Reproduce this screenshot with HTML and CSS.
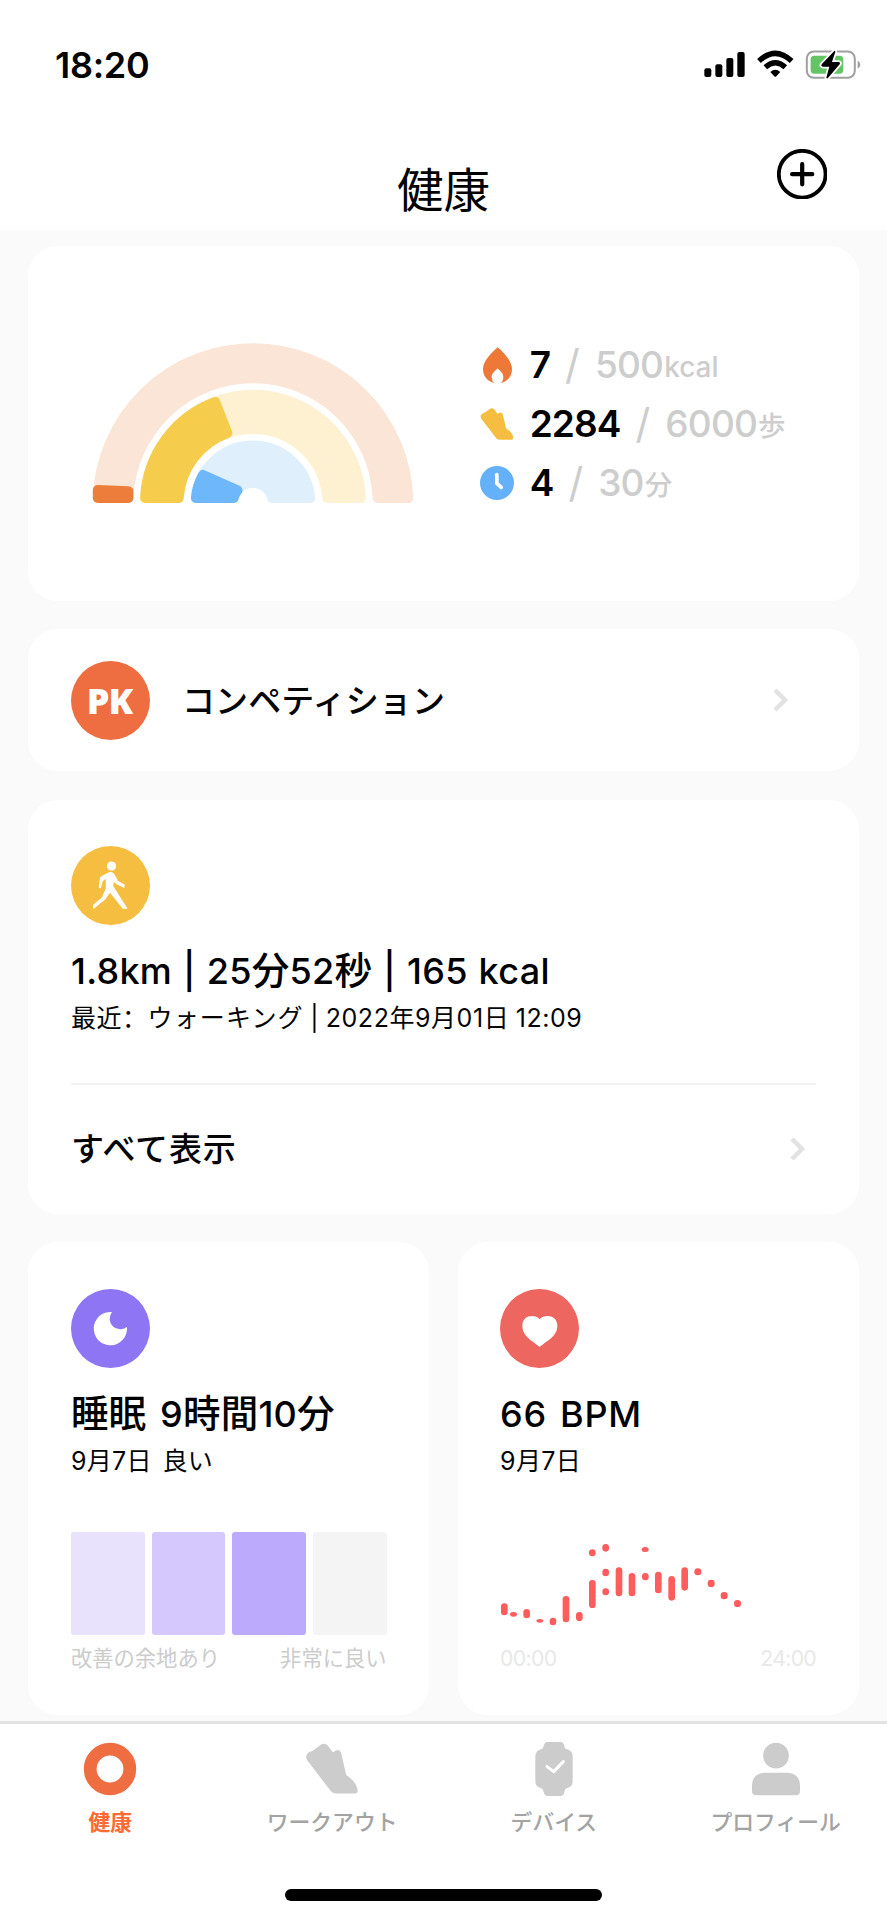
FILE: index.html
```html
<!DOCTYPE html>
<html lang="ja">
<head>
<meta charset="utf-8">
<title>健康</title>
<link rel="stylesheet" href="styles.css">
</head>
<body>
<svg class="defs" width="0" height="0">
  <symbol id="shoe" viewBox="53 57 155 151"><path d="M57 88Q62 82 72 80L98 61Q108 55 117 63L133 84L142 79Q154 74 158 88L173 152Q207 175 207 200Q206 207 199 207H142Q134 207 128 201L57 109Q50 98 57 88Z"/></symbol>
</svg>
<div class="screen">
  <header class="header">
    <div class="status">
      <span class="time">18:20</span>
      <svg class="status-icons" viewBox="50 30 472 90">
        <rect x="51" y="85" width="21" height="26" rx="6"/><rect x="84" y="73" width="21" height="38" rx="6"/><rect x="117" y="54" width="21" height="57" rx="6"/><rect x="150" y="36" width="22" height="75" rx="6"/>
        <g fill="none" stroke="#000" stroke-width="16"><path d="M215 63Q264 17 313 63"/><path d="M234 82Q264 55 294 82"/></g>
        <path d="M249 96Q264 83 279 96L267 109Q264 112 261 109Z"/>
        <rect x="358.500" y="34.500" width="144" height="79" rx="21" fill="none" stroke="#a0a0a0" stroke-width="6"/>
        <path d="M511 62Q519 65 519 74T511 86Z" fill="#a0a0a0"/>
        <rect x="370" y="47" width="98" height="54" rx="11" fill="#65c466"/>
        <path d="M441 33L403 73Q400 79 407 80H426L417 113Q418 117 422 114L457 73Q460 67 454 66H434L444 36Q444 31 441 33Z" stroke="#fff" stroke-width="11" paint-order="stroke"/>
      </svg>
    </div>
    <div class="titlebar">
      <h1>健康</h1>
      <svg class="add" viewBox="0 0 50 50" fill="none" stroke="#000"><circle cx="25" cy="25" r="23.200" stroke-width="3.800"/><path d="M25 15V35M15 25H35" stroke-width="4.200" stroke-linecap="round"/></svg>
    </div>
  </header>

  <main class="content">
    <section class="card rings">
      <svg class="arcs" viewBox="-161 -161 322 161" stroke-width="10" stroke-linejoin="round">
        <path class="t1" d="M-155.200-5A155.300 155.300 0 0 1 155.200-5H124.600A124.700 124.700 0 0 0-124.600-5Z"/>
        <path class="t2" d="M-107.900-5A108 108 0 0 1 107.900-5H74.300A74.500 74.500 0 0 0-74.300-5Z"/>
        <path class="t3" d="M-57.100-5A57.300 57.300 0 0 1 57.100-5H19.400A20 20 0 0 0-19.400-5Z"/>
        <path class="p1" d="M-155.200-5L-155.200-13L-124.600-11.700V-5Z"/>
        <path class="p2" d="M-107.900-5A108 108 0 0 1-37.900-101.100L-25.600-70A74.500 74.500 0 0 0-74.300-5Z"/>
        <path class="p3" d="M-57.100-5A57.300 57.300 0 0 1-50-28L-15.500-12.700A20 20 0 0 0-19.400-5Z"/>
      </svg>
      <ul class="goals">
        <li><svg class="gi" viewBox="60 79 102 108"><path fill="#ed7837" d="M113 80C99 92 69 120 69 145C69 169 84 182 103 187Q95 181 95 169C95 157 107 150 113 143C119 150 130 157 130 169Q130 181 122 187C142 182 156 168 156 145C156 120 127 92 113 80Z"/></svg><b>7</b><i>/</i><span class="goal">500</span><small class="kcal">kcal</small></li>
        <li><svg class="gi shoe"><use href="#shoe"/></svg><b>2284</b><i>/</i><span class="goal">6000</span><small>歩</small></li>
        <li><svg class="gi" viewBox="60 438 101 102"><circle cx="110.500" cy="489" r="50.500" fill="#64b0f9"/><path d="M110 464V490L123 502" fill="none" stroke="#fff" stroke-width="11" stroke-linecap="round" stroke-linejoin="round"/></svg><b>4</b><i>/</i><span class="goal">30</span><small>分</small></li>
      </ul>
    </section>

    <section class="card compete">
      <div class="badge pk">PK</div>
      <span class="row-label">コンペティション</span>
      <svg class="chev" viewBox="0 0 16 24"><path d="M3 2L13 12L3 22"/></svg>
    </section>

    <section class="card workout">
      <svg class="badge" viewBox="0 0 79 79"><circle cx="39.500" cy="39.500" r="39.500" fill="#f5be41"/><g fill="#fff"><circle cx="40.600" cy="20" r="4.600"/><path d="M37.900 26.300L30 30.400Q29.100 31 29 32L27.700 41.300L29.800 42.500L31.800 35L34.800 33V42.300L31 51.300L22.200 58.700V63.200L34.400 53.300L39 46.700L51.700 62.700H56.600L42.300 40L42.900 35.700L45.500 38.300L53.200 41.900L53.800 38.700L47.100 35L43.300 28Q41 25 37.900 26.300Z"/></g></svg>
      <h2 class="w-title">1.8km | 25<span class="kanji">分</span>52<span class="kanji">秒</span> | 165 kcal</h2>
      <p class="sub w-sub">最近<span class="colon" lang="zh-CN">：</span><span class="kind">ウォーキング</span> | 2022年9月01日 12:09</p>
      <div class="all"><span class="row-label">すべて表示</span><svg class="chev" viewBox="0 0 16 24"><path d="M3 2L13 12L3 22"/></svg></div>
    </section>

    <div class="pair">
      <section class="card metric">
        <svg class="badge" viewBox="153 148 237 237"><circle cx="271.500" cy="266.500" r="118.500" fill="#8e75f3"/><path fill="#fff" d="M276 217A32 32 0 0 0 321 262A50 50 0 1 1 276 217Z"/></svg>
        <h2 class="s-title"><span class="kanji">睡眠</span> 9<span class="kanji">時間</span>10<span class="kanji">分</span></h2>
        <p class="sub">9月7日 良い</p>
        <div class="bars"><span></span><span></span><span></span><span></span></div>
        <div class="scale"><span>改善の余地あり</span><span>非常に良い</span></div>
      </section>
      <section class="card metric">
        <svg class="badge" viewBox="150 87 237 237"><circle cx="268.500" cy="205.500" r="118.500" fill="#ee6660"/><path fill="#fff" d="M269 178C255 162 217 164 217 198C217 231 251 244 269 261C287 244 322 231 322 198C322 164 283 162 269 178Z"/></svg>
        <h2 class="b-title">66 BPM</h2>
        <p class="sub">9月7日</p>
        <svg class="pulse" viewBox="150 96 948 309" fill="#ff5c5e">
          <rect x="153" y="310" width="20" height="36" rx="10"/><rect x="180" y="336" width="21" height="14" rx="10"/><rect x="220" y="327" width="20" height="28" rx="10"/><rect x="259" y="357" width="21" height="11" rx="10"/><rect x="299" y="353" width="20" height="23" rx="10"/><rect x="338" y="288" width="20" height="79" rx="10"/><rect x="378" y="336" width="20" height="27" rx="10"/><rect x="417" y="240" width="20" height="84" rx="10"/><rect x="417" y="148" width="20" height="21" rx="10"/><rect x="457" y="132" width="20" height="23" rx="10"/><rect x="457" y="206" width="20" height="23" rx="10"/><rect x="457" y="265" width="20" height="21" rx="10"/><rect x="497" y="202" width="20" height="87" rx="10"/><rect x="536" y="219" width="20" height="70" rx="10"/><rect x="575" y="141" width="21" height="15" rx="10"/><rect x="576" y="219" width="20" height="22" rx="10"/><rect x="615" y="215" width="20" height="65" rx="10"/><rect x="655" y="228" width="20" height="74" rx="10"/><rect x="694" y="202" width="20" height="70" rx="10"/><rect x="733" y="205" width="21" height="21" rx="10"/><rect x="773" y="239" width="21" height="22" rx="10"/><rect x="812" y="276" width="21" height="22" rx="10"/><rect x="852" y="300" width="21" height="21" rx="10"/>
        </svg>
        <div class="scale hours"><span>00:00</span><span>24:00</span></div>
      </section>
    </div>
  </main>

  <nav class="tabs">
    <a class="tab active"><svg class="ti" viewBox="0 0 54 54"><circle cx="27" cy="27" r="19.800" fill="none" stroke="#ee6d41" stroke-width="12.800"/></svg>健康</a>
    <a class="tab"><svg class="ti ti-shoe"><use href="#shoe"/></svg>ワークアウト</a>
    <a class="tab"><svg class="ti" viewBox="713 50 162 162"><path d="M774 50H814Q820 50 823 56L827 68Q828 71 833 72Q850 76 850 94V168Q850 184 833 189Q828 190 827 194L823 206Q820 212 814 212H774Q768 212 765 206L761 194Q760 190 755 189Q738 184 738 168V94Q738 76 755 72Q760 71 761 68L765 56Q768 50 774 50Z"/><path d="M773 124L793 139L822 109" fill="none" stroke="#fff" stroke-width="9" stroke-linecap="round" stroke-linejoin="round"/></svg>デバイス</a>
    <a class="tab"><svg class="ti" viewBox="1374 50 162 162"><circle cx="1455" cy="91" r="38.500"/><path d="M1420 142H1490Q1527 146 1527 180V197Q1527 210 1514 210H1396Q1383 210 1383 197V180Q1383 146 1420 142Z"/></svg>プロフィール</a>
  </nav>
  <div class="home"></div>
</div>
</body>
</html>
```

FILE: styles.css
```css
* { box-sizing: border-box; margin: 0; padding: 0; }
body { background: #fff; color: #050505; font-family: Inter, "Noto Sans CJK JP", sans-serif; }
svg { display: block; flex: none; }
.defs { position: absolute; }
.screen { width: 887px; height: 1920px; display: flex; flex-direction: column; overflow: hidden; }

.header { height: 230px; flex: none; }
.status { height: 130px; padding: 43px 26px 0 55px; display: flex; justify-content: space-between; align-items: flex-start; }
.time { font-size: 36px; font-weight: 600; line-height: 44px; letter-spacing: -0.300px; }
.status-icons { width: 157.300px; height: 30px; margin-top: 7px; }
.titlebar { display: grid; grid-template-columns: 1fr auto 1fr; height: 100px; padding: 0 60px; }
h1 { grid-column: 2; font-size: 46.500px; font-weight: 400; line-height: 60px; margin: 30px 0 0; color: #000; }
.add { width: 50.400px; height: 50.400px; justify-self: end; margin-top: 19px; }

.content { height: 1491px; flex: none; background: #fafafa; padding: 16px 28.400px 0; display: flex; flex-direction: column; gap: 28.500px; overflow: hidden; }
.card { background: #fff; border-radius: 30px; flex: none; }
.badge { width: 79px; height: 79px; flex: none; }

.rings { height: 354.500px; display: flex; padding: 96px 0 0 63.200px; }
.arcs { width: 322px; height: 161px; }
.t1 { fill: #fae5d6; stroke: #fae5d6; }
.t2 { fill: #fdf1d2; stroke: #fdf1d2; }
.t3 { fill: #dfeffc; stroke: #dfeffc; }
.p1 { fill: #ed7d3a; stroke: #ed7d3a; }
.p2 { fill: #f6cc4d; stroke: #f6cc4d; }
.p3 { fill: #6db7fa; stroke: #6db7fa; }
.goals { list-style: none; margin: -7px 0 0 66.100px; }
.goals li { display: flex; align-items: center; height: 59px; line-height: 59px; font-size: 37px; font-weight: 500; color: #cdcdcd; }
.gi { width: 34px; height: 36px; margin-right: 16px; }
.shoe { height: 32px; fill: #f5be41; }
.goals b { color: #000; font-weight: 600; letter-spacing: -0.900px; }
.goals i { font-style: normal; font-size: 41px; font-weight: 400; margin: 0 15px; }
.goal { letter-spacing: -0.800px; }
.goals small { font-size: 27.500px; padding-top: 5px; margin-left: 1px; }
.goals .kcal { font-size: 28px; padding-top: 6px; }

.compete { height: 142px; display: flex; align-items: center; padding: 0 71px 0 42.500px; }
.pk { background: #ee6d41; border-radius: 50%; color: #fff; font: 800 36px/79px "Open Sans", sans-serif; text-align: center; letter-spacing: -1px; padding-right: 2px; }
.row-label { font-size: 33px; font-weight: 500; line-height: 44px; flex: 1; }
.compete .row-label { margin: 1px 0 0 32px; letter-spacing: 0.150px; }
.chev { width: 16px; height: 24px; fill: none; stroke: #e2e2e2; stroke-width: 4.500; }

.workout { height: 414px; padding: 46px 42.500px 0; display: flex; flex-direction: column; }
h2 { font-size: 36px; font-weight: 500; line-height: 44px; margin-top: 24px; white-space: nowrap; color: #000; }
.kanji { font-size: 37.500px; line-height: 1; }
.w-title { letter-spacing: 0.300px; word-spacing: 1px; }
.s-title { letter-spacing: 0.200px; word-spacing: 4px; }
.b-title { letter-spacing: 0.800px; word-spacing: 2.500px; }
.sub { font-size: 25px; line-height: 34px; margin-top: 7.500px; white-space: nowrap; letter-spacing: 0.300px; word-spacing: 3.500px; }
.w-sub { letter-spacing: 0.550px; word-spacing: -1px; margin-top: 8px; }
.colon { font-family: "Noto Sans CJK SC", sans-serif; line-height: 1; }
.kind { letter-spacing: 1.150px; }
.all { margin-top: 48.500px; border-top: 2px solid #f2f2f2; flex: 1; display: flex; align-items: center; padding-right: 11.500px; }
.all .row-label { letter-spacing: 0.900px; }

.pair { display: grid; grid-template-columns: 1fr 1fr; gap: 28.500px; }
.metric { height: 473px; padding: 47px 42.500px 0; }
.bars { display: grid; grid-template-columns: repeat(4, 1fr); gap: 7px; height: 103px; margin-top: 54px; }
.bars span { border-radius: 3px; background: #e8e2fc; }
.bars span:nth-child(2) { background: #d4c8fc; }
.bars span:nth-child(3) { background: #bcabfc; }
.bars span:nth-child(4) { background: #f4f4f4; }
.pulse { width: 316px; height: 103px; margin-top: 54px; }
.scale { display: flex; justify-content: space-between; font-size: 21.300px; line-height: 28px; margin-top: 9px; color: #ccc; }
.hours { color: #e8e8e8; letter-spacing: -0.700px; }

.tabs { height: 140px; flex: none; border-top: 3px solid #e2e2e2; display: grid; grid-template-columns: repeat(4, 1fr); }
.tab { display: flex; flex-direction: column; align-items: center; padding: 18px 1px 0 0; font-size: 21.800px; line-height: 28px; gap: 12px; font-weight: 500; color: #a3a3a3; white-space: nowrap; }
.active { color: #ff6a34; font-weight: 700; }
.ti { width: 54px; height: 54px; fill: #ccc; }
.ti-shoe { width: 52px; padding: 1px 0 2px; }
.home { width: 317px; height: 12px; border-radius: 6px; background: #000; margin: 28px auto 0; flex: none; }
```
